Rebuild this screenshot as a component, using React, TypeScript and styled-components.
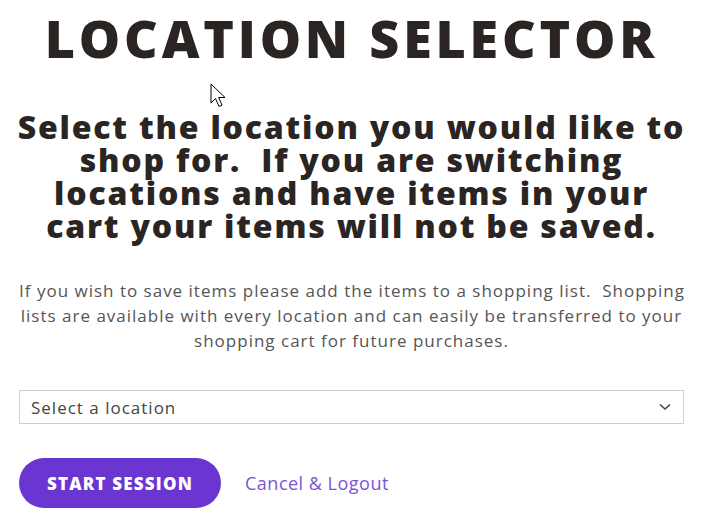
import React from "react";
import styled, { createGlobalStyle } from "styled-components";

const Global = createGlobalStyle`
  html, body { margin: 0; padding: 0; background: #fff; }
  body { font-family: "Open Sans", "Liberation Sans", sans-serif; }
`;

const Page = styled.div`
  position: relative;
  width: 715px;
  height: 523px;
  overflow: hidden;
  box-sizing: border-box;
  padding: 0 31px 0 19px;
  display: flex;
  flex-direction: column;
`;

const Title = styled.h1`
  margin: 8px 0 0;
  text-align: center;
  font-family: "Open Sans", sans-serif;
  font-weight: 800;
  font-size: 52px;
  line-height: 60px;
  letter-spacing: 3.8px;
  color: #2a2522;
  white-space: nowrap;
`;

const Warning = styled.h2`
  margin: 42px -4px 0 -4px;
  text-align: center;
  font-family: "Open Sans", sans-serif;
  font-weight: 800;
  font-size: 32px;
  line-height: 33px;
  letter-spacing: 1.8px;
  color: #2a2522;
  white-space: nowrap;
`;

const Info = styled.p`
  margin: 36px 0 0;
  text-align: center;
  font-family: "Open Sans", sans-serif;
  font-weight: 400;
  font-size: 17px;
  line-height: 25px;
  letter-spacing: 1px;
  color: #555;
  white-space: nowrap;
`;

const SelectBox = styled.div`
  margin-top: 37px;
  height: 34px;
  border: 1px solid #cfcfcf;
  box-sizing: border-box;
  display: flex;
  align-items: center;
  justify-content: space-between;
  padding: 0 12px 0 11px;
  font-size: 17px;
  letter-spacing: 1px;
  color: #444;
`;

const Actions = styled.div`
  margin-top: 34px;
  display: flex;
  align-items: center;
  gap: 24px;
`;

const StartButton = styled.button`
  width: 202px;
  height: 50px;
  padding: 0;
  border: none;
  border-radius: 25px;
  background: #6a35d0;
  color: #fff;
  font-family: "Open Sans", sans-serif;
  font-weight: 800;
  font-size: 17px;
  letter-spacing: 1.2px;
`;

const CancelLink = styled.a`
  font-size: 18px;
  letter-spacing: 0.5px;
  color: #7a55d6;
  text-decoration: none;
`;

const Cursor = styled.svg`
  position: absolute;
  left: 210px;
  top: 83px;
`;

export default function App() {
  return (
    <>
      <Global />
      <Page>
        <Title>LOCATION SELECTOR</Title>
        <Warning>
          Select the location you would like to
          <br />
          shop for.&nbsp; If you are switching
          <br />
          locations and have items in your
          <br />
          cart your items will not be saved.
        </Warning>
        <Info>
          If you wish to save items please add the items to a shopping list.&nbsp; Shopping
          <br />
          lists are available with every location and can easily be transferred to your
          <br />
          shopping cart for future purchases.
        </Info>
        <SelectBox>
          <span>Select a location</span>
          <svg width="12" height="8" viewBox="0 0 12 8">
            <path d="M1 1.5 L6 6 L11 1.5" fill="none" stroke="#444" strokeWidth="1.6" />
          </svg>
        </SelectBox>
        <Actions>
          <StartButton>START SESSION</StartButton>
          <CancelLink href="#">Cancel &amp; Logout</CancelLink>
        </Actions>
        <Cursor width="20" height="27" viewBox="0 0 20 27">
          <path d="M1 1 L1 20 L5.5 15.5 L9 23.5 L12 22.2 L8.6 14.5 L15 14.5 Z" fill="#fff" stroke="#000" strokeWidth="1" strokeLinejoin="round" />
        </Cursor>
      </Page>
    </>
  );
}
